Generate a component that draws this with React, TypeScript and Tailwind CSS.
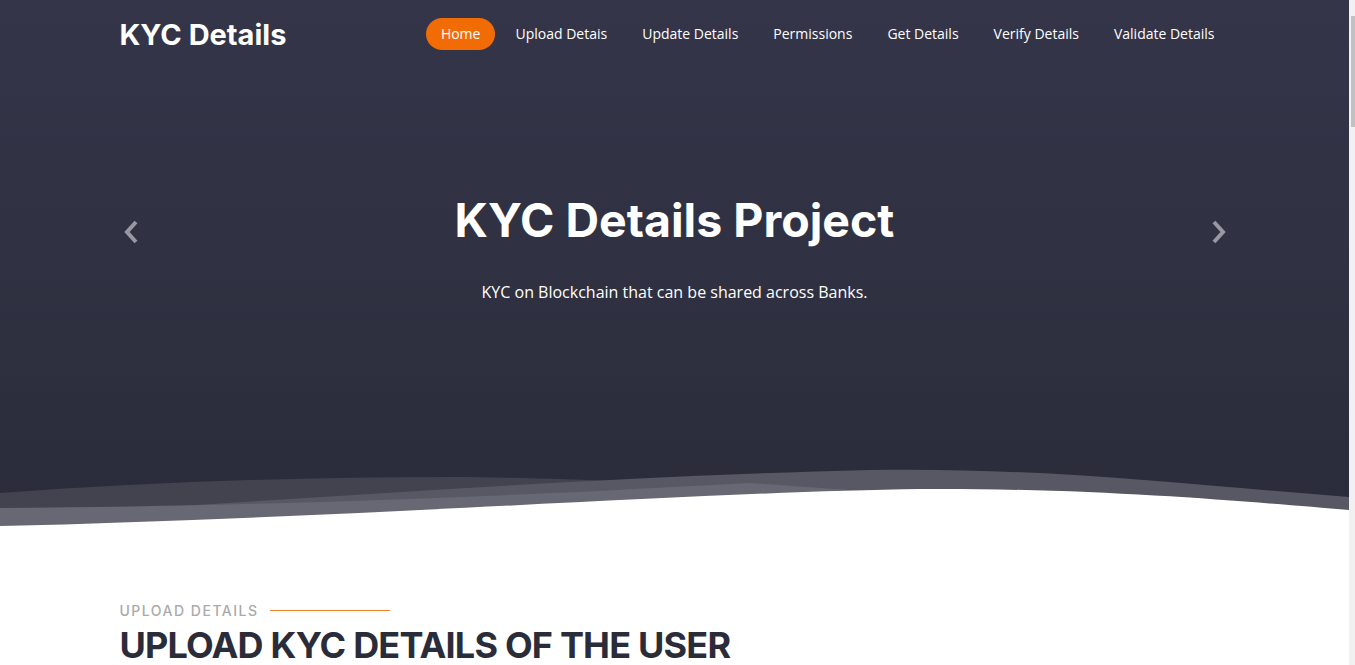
const navItems = [
  "Home",
  "Upload Detais",
  "Update Details",
  "Permissions",
  "Get Details",
  "Verify Details",
  "Validate Details",
];

function Chevron({ dir }: { dir: "left" | "right" }) {
  return (
    <svg width="16" height="24" viewBox="0 0 16 24" className="block">
      <polyline
        points={dir === "left" ? "12,2 3,12 12,22" : "4,2 13,12 4,22"}
        fill="none"
        stroke="rgba(255,255,255,0.5)"
        strokeWidth="4"
      />
    </svg>
  );
}

function Wave() {
  return (
    <svg
      viewBox="0 0 1349 60"
      preserveAspectRatio="none"
      className="block w-full h-[60px]"
    >
      <path d="M0,27 C150,16 300,11 450,11 C650,12 900,30 1349,60 L0,60 Z" fill="#43434f" />
      <path d="M0,50 C300,35 550,12 870,4 C1050,1 1200,20 1349,31 L1349,60 L0,60 Z" fill="#575864" />
      <path d="M0,42 C300,40 550,28 750,17 L1349,60 L0,60 Z" fill="#676873" />
      <path d="M0,60 C350,52 700,26 920,23 C1100,22 1250,36 1349,44 L1349,60 Z" fill="#ffffff" />
    </svg>
  );
}

export default function App() {
  return (
    <div className="flex h-[665px] w-full overflow-hidden bg-white">
      <div className="flex-1 overflow-hidden">
        <section className="flex h-[526px] flex-col bg-gradient-to-b from-[#343549] to-[#2b2c3a]">
          <header className="mx-auto flex h-[68px] w-[1110px] items-center justify-between">
            <span className="font-['Inter',sans-serif] text-[29px] font-bold leading-none text-white">
              KYC Details
            </span>
            <nav className="flex items-center">
              {navItems.map((item, i) => (
                <a
                  key={item}
                  className={`ml-[5px] rounded-full px-[15px] py-[6px] font-['Open_Sans',sans-serif] text-[14px] leading-[20px] text-white ${
                    i === 0 ? "bg-[#f26c05]" : ""
                  }`}
                >
                  {item}
                </a>
              ))}
            </nav>
          </header>

          <div className="mx-auto flex w-[1110px] items-start justify-between pt-[123px]">
            <button className="mt-[29px] flex w-[24px] justify-center">
              <Chevron dir="left" />
            </button>
            <div className="flex flex-col items-center">
              <h1 className="font-['Inter',sans-serif] text-[46.5px] font-bold leading-[58px] text-white">
                KYC Details Project
              </h1>
              <p className="mt-[31px] font-['Open_Sans',sans-serif] text-[16px] leading-[24px] text-white">
                KYC on Blockchain that can be shared across Banks.
              </p>
            </div>
            <button className="mt-[29px] flex w-[24px] justify-center">
              <Chevron dir="right" />
            </button>
          </div>

          <div className="mt-auto">
            <Wave />
          </div>
        </section>

        <section className="mx-auto w-[1110px] pt-[74px]">
          <div className="flex items-center">
            <span className="font-['Inter',sans-serif] text-[14px] font-medium uppercase leading-[21px] tracking-[1.5px] text-[#aaaaaa]">
              Upload Details
            </span>
            <span className="ml-[11px] h-px w-[120px] bg-[#f6822b]" />
          </div>
          <h2 className="font-['Inter',sans-serif] text-[36px] font-bold uppercase leading-[48px] tracking-[-0.8px] text-[#2b2c3a]">
            Upload KYC Details of the User
          </h2>
        </section>
      </div>

      <div className="flex w-[6px] flex-col bg-[#f1f1f1]">
        <div className="ml-auto mt-[16px] h-[111px] w-[4px] bg-[#c1c1c1]" />
      </div>
    </div>
  );
}
